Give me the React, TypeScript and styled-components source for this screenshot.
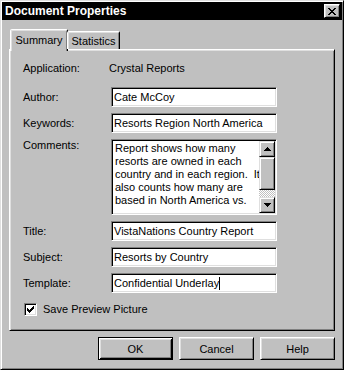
import React from 'react';
import styled, { createGlobalStyle, css } from 'styled-components';

const GlobalStyle = createGlobalStyle`
  html, body {
    margin: 0;
    padding: 0;
    background: #c0c0c0;
  }
  body {
    font-family: "Liberation Sans", Arial, sans-serif;
    font-size: 11px;
    color: #000;
  }
`;

const raised = css`
  border: 1px solid;
  border-color: #fff #000 #000 #fff;
  box-shadow: inset 1px 1px #dfdfdf, inset -1px -1px #808080;
`;

const sunken = css`
  border: 1px solid;
  border-color: #808080 #fff #fff #808080;
  box-shadow: inset 1px 1px #000, inset -1px -1px #dfdfdf;
`;

const Window = styled.div`
  width: 344px;
  height: 370px;
  box-sizing: border-box;
  background: #c0c0c0;
  border: 1px solid;
  border-color: #dfdfdf #000 #000 #dfdfdf;
  box-shadow: inset 1px 1px #fff, inset -1px -1px #808080;
  padding: 1px 1px 2px 1px;
  display: flex;
  flex-direction: column;
`;

const TitleBar = styled.div`
  height: 18px;
  background: #000;
  display: flex;
  align-items: center;
  justify-content: space-between;
  padding: 0 2px 0 3px;
  box-sizing: border-box;
`;

const Title = styled.span`
  color: #fff;
  font-weight: bold;
  font-size: 12px;
  letter-spacing: 0;
`;

const CloseButton = styled.div`
  width: 16px;
  height: 14px;
  box-sizing: border-box;
  background: #c0c0c0;
  ${raised};
  display: flex;
  align-items: center;
  justify-content: center;
`;

const Body = styled.div`
  flex: 1;
  display: flex;
  flex-direction: column;
  padding: 9px 7px 6px 7px;
`;

const TabRow = styled.div`
  display: flex;
  align-items: flex-end;
  padding-left: 1px;
  margin-bottom: -2px;
  position: relative;
  z-index: 1;
`;

const Tab = styled.div<{ $active?: boolean; $width: number }>`
  width: ${({ $width }) => $width}px;
  box-sizing: border-box;
  background: #c0c0c0;
  border: 1px solid;
  border-bottom: none;
  border-color: #fff #000 transparent #fff;
  border-radius: 2px 2px 0 0;
  box-shadow: inset 1px 1px #dfdfdf, inset -1px 0 #808080;
  display: flex;
  align-items: center;
  justify-content: center;
  height: ${({ $active }) => ($active ? 22 : 18)}px;
  margin-bottom: ${({ $active }) => ($active ? 0 : 2)}px;
  padding-bottom: ${({ $active }) => ($active ? 2 : 0)}px;
  margin-left: ${({ $active }) => ($active ? 0 : -1)}px;
`;

const Panel = styled.div`
  height: 282px;
  box-sizing: border-box;
  ${raised};
  padding: 8px 0 0 13px;
`;

const Form = styled.div`
  display: grid;
  grid-template-columns: 88px 166px;
  row-gap: 6px;
  align-items: center;
`;

const Label = styled.div<{ $top?: boolean }>`
  line-height: 13px;
  align-self: ${({ $top }) => ($top ? 'start' : 'center')};
  padding-top: ${({ $top }) => ($top ? 0 : 1)}px;
`;

const Value = styled.div`
  height: 20px;
  line-height: 20px;
  margin-left: -2px;
  margin-bottom: 3px;
`;

const AppLabel = styled(Label)`
  margin-bottom: 3px;
`;

const Field = styled.div`
  height: 20px;
  box-sizing: border-box;
  background: #fff;
  ${sunken};
  padding: 0 2px;
  line-height: 18px;
  white-space: nowrap;
  overflow: hidden;
`;

const Caret = styled.span`
  display: inline-block;
  width: 1px;
  height: 13px;
  background: #000;
  vertical-align: -3px;
`;

const Memo = styled.div`
  height: 76px;
  box-sizing: border-box;
  background: #fff;
  ${sunken};
  padding: 1px;
  display: flex;
`;

const MemoText = styled.div`
  flex: 1;
  padding: 1px 0 0 2px;
  line-height: 13px;
  white-space: pre;
  overflow: hidden;
`;

const ScrollBar = styled.div`
  width: 16px;
  display: flex;
  flex-direction: column;
`;

const ScrollButton = styled.div<{ $size: number }>`
  height: ${({ $size }) => $size}px;
  flex: none;
  box-sizing: border-box;
  background: #c0c0c0;
  border: 1px solid;
  border-color: #dfdfdf #000 #000 #dfdfdf;
  box-shadow: inset 1px 1px #fff, inset -1px -1px #808080;
  display: flex;
  align-items: center;
  justify-content: center;
`;

const Track = styled.div`
  flex: 1;
  background-color: #fff;
  background-image: repeating-conic-gradient(#c0c0c0 0 25%, #fff 0 50%);
  background-size: 2px 2px;
`;

const CheckRow = styled.div`
  grid-column: 1 / span 2;
  display: flex;
  align-items: center;
  height: 20px;
  margin-top: 0;
`;

const CheckBox = styled.div`
  width: 13px;
  height: 13px;
  box-sizing: border-box;
  background: #fff;
  ${sunken};
  margin-left: 1px;
  margin-right: 6px;
  display: flex;
  align-items: center;
  justify-content: center;
`;

const ButtonRow = styled.div`
  display: flex;
  justify-content: flex-end;
  gap: 6px;
  margin-top: 6px;
`;

const Button = styled.div<{ $default?: boolean }>`
  width: 75px;
  height: 23px;
  box-sizing: border-box;
  background: #c0c0c0;
  display: flex;
  align-items: center;
  justify-content: center;
  ${({ $default }) =>
    $default
      ? css`
          border: 1px solid #000;
          box-shadow: inset 1px 1px #fff, inset -1px -1px #000,
            inset 2px 2px #dfdfdf, inset -2px -2px #808080;
        `
      : raised};
`;

const CloseGlyph = () => (
  <svg width="8" height="7" viewBox="0 0 8 7" shapeRendering="crispEdges">
    <path
      fill="#000"
      d="M0 0h2v1H0zM6 0h2v1H6zM1 1h2v1H1zM5 1h2v1H5zM2 2h4v1H2zM3 3h2v1H3zM2 4h4v1H2zM1 5h2v1H1zM5 5h2v1H5zM0 6h2v1H0zM6 6h2v1H6z"
    />
  </svg>
);

const Arrow = ({ down }: { down?: boolean }) => (
  <svg width="7" height="4" viewBox="0 0 7 4" shapeRendering="crispEdges">
    <path
      fill="#000"
      d={
        down
          ? 'M0 0h7v1H0zM1 1h5v1H1zM2 2h3v1H2zM3 3h1v1H3z'
          : 'M3 0h1v1H3zM2 1h3v1H2zM1 2h5v1H1zM0 3h7v1H0z'
      }
    />
  </svg>
);

const CheckMark = () => (
  <svg width="7" height="7" viewBox="0 0 7 7" shapeRendering="crispEdges">
    <path
      fill="#000"
      d="M0 2h1v3H0zM1 3h1v3H1zM2 4h1v3H2zM3 3h1v3H3zM4 2h1v3H4zM5 1h1v3H5zM6 0h1v3H6z"
    />
  </svg>
);

const comments = [
  'Report shows how many',
  'resorts are owned in each',
  'country and in each region.  It',
  'also counts how many are',
  'based in North America vs.',
].join('\n');

const App = () => {
  return (
    <>
      <GlobalStyle />
      <Window>
        <TitleBar>
          <Title>Document Properties</Title>
          <CloseButton>
            <CloseGlyph />
          </CloseButton>
        </TitleBar>
        <Body>
          <TabRow>
            <Tab $active $width={58}>Summary</Tab>
            <Tab $width={53}>Statistics</Tab>
          </TabRow>
          <Panel>
            <Form>
              <AppLabel>Application:</AppLabel>
              <Value>Crystal Reports</Value>

              <Label>Author:</Label>
              <Field>Cate McCoy</Field>

              <Label>Keywords:</Label>
              <Field>Resorts Region North America</Field>

              <Label $top>Comments:</Label>
              <Memo>
                <MemoText>{comments}</MemoText>
                <ScrollBar>
                  <ScrollButton $size={16}>
                    <Arrow />
                  </ScrollButton>
                  <ScrollButton $size={33} />
                  <Track />
                  <ScrollButton $size={16}>
                    <Arrow down />
                  </ScrollButton>
                </ScrollBar>
              </Memo>

              <Label>Title:</Label>
              <Field>VistaNations Country Report</Field>

              <Label>Subject:</Label>
              <Field>Resorts by Country</Field>

              <Label>Template:</Label>
              <Field>
                Confidential Underlay
                <Caret />
              </Field>

              <CheckRow>
                <CheckBox>
                  <CheckMark />
                </CheckBox>
                Save Preview Picture
              </CheckRow>
            </Form>
          </Panel>
          <ButtonRow>
            <Button $default>OK</Button>
            <Button>Cancel</Button>
            <Button>Help</Button>
          </ButtonRow>
        </Body>
      </Window>
    </>
  );
};

export default App;
